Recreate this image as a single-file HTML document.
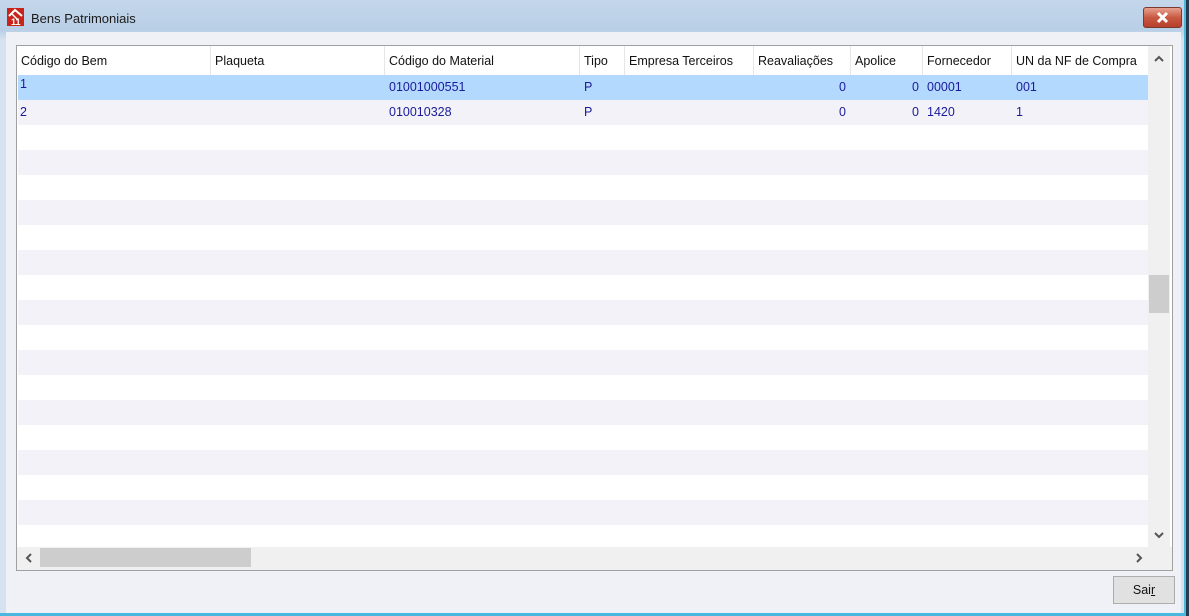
<!DOCTYPE html>
<html><head><style>
*{margin:0;padding:0;box-sizing:border-box}
body{width:1189px;height:616px;overflow:hidden;background:#2b3a4a;font-family:"Liberation Sans",sans-serif;font-size:12.5px;position:relative}
.win{position:absolute;left:0;top:0;width:1189px;height:616px;background:linear-gradient(#c4d6ea,#b9cfe6 30px,#d5e2f0 40px)}
.client{position:absolute;left:6px;top:32px;width:1175px;height:581px;background:#f0f0f7}
.bot{position:absolute;left:0;top:613px;width:1189px;height:3px;background:#4ab7de}
.rgt{position:absolute;left:1184px;top:0;width:2px;height:616px;background:#4ab7de}
.rgt2{position:absolute;left:1186px;top:0;width:3px;height:616px;background:#2b3a4a}
.title{position:absolute;left:31px;top:11px;font-size:13px;color:#1a1a1a}
.close{position:absolute;left:1143px;top:7px;width:39px;height:21px;border:1px solid #7a3a30;border-radius:3px;background:linear-gradient(#e8a090,#c85a44 50%,#b8402a)}
.grid{position:absolute;left:16px;top:45px;width:1157px;height:526px;border:1px solid #a0a0a0;background:#fff;overflow:hidden}
.hdr{position:absolute;left:0;top:0;height:29px;width:1131px;background:#fff}
.hc{position:absolute;top:0;height:29px;line-height:30px;padding-left:4px;border-right:1px solid #e6e6e6;color:#111;white-space:nowrap}
.row{position:absolute;left:1px;width:1130px;height:25px}
.c{position:absolute;top:0;line-height:25px;color:#1a1a9a;white-space:nowrap}
.vs{position:absolute;left:1131px;top:0;width:22px;height:501px;background:#f0f0f0}
.hs{position:absolute;left:0;top:501px;width:1155px;height:23px;background:#f0f0f0}
.btn{position:absolute;left:1113px;top:576px;width:62px;height:28px;border:1px solid #adadad;background:#e1e1e1;text-align:center;line-height:27px;color:#111}
</style></head><body>
<div class="win">
<svg style="position:absolute;left:7px;top:8px" width="17" height="18" viewBox="0 0 17 18"><rect width="17" height="18" fill="#c8241c"/><path d="M2 8 L8 2 L15 8" stroke="#fff" stroke-width="2" fill="none"/><path d="M4 5 L11 12" stroke="#fff" stroke-width="1.5"/><text x="4" y="17" font-size="9" font-weight="bold" fill="#fff" font-family="Liberation Sans">11</text></svg>
<div class="title">Bens Patrimoniais</div>
<div class="close"><svg width="37" height="19" viewBox="0 0 37 19"><path d="M14 5 L23 14 M23 5 L14 14" stroke="#fff" stroke-width="3"/></svg></div>
<div class="client"></div>
<div class="bot"></div>
<div class="rgt"></div><div class="rgt2"></div>
<div class="grid">
<div class="hdr">
<div class="hc" style="left:0;width:194px">Código do Bem</div>
<div class="hc" style="left:194px;width:174px">Plaqueta</div>
<div class="hc" style="left:368px;width:195px">Código do Material</div>
<div class="hc" style="left:563px;width:45px">Tipo</div>
<div class="hc" style="left:608px;width:129px">Empresa Terceiros</div>
<div class="hc" style="left:737px;width:97px">Reavaliações</div>
<div class="hc" style="left:834px;width:72px">Apolice</div>
<div class="hc" style="left:906px;width:89px">Fornecedor</div>
<div class="hc" style="left:995px;width:136px;border:none">UN da NF de Compra</div>
</div>
<div class="row" style="top:29px;background:#b3d9ff">
<span class="c" style="left:2px;top:-3px">1</span><span class="c" style="left:371px">01001000551</span><span class="c" style="left:566px">P</span><span class="c" style="left:821px">0</span><span class="c" style="left:894px">0</span><span class="c" style="left:909px">00001</span><span class="c" style="left:998px">001</span></div>
<div class="row" style="top:54px;background:#f2f2f8">
<span class="c" style="left:2px">2</span><span class="c" style="left:371px">010010328</span><span class="c" style="left:566px">P</span><span class="c" style="left:821px">0</span><span class="c" style="left:894px">0</span><span class="c" style="left:909px">1420</span><span class="c" style="left:998px">1</span></div>
<div class="row" style="top:104px;background:#f2f2f8"></div>
<div class="row" style="top:154px;background:#f2f2f8"></div>
<div class="row" style="top:204px;background:#f2f2f8"></div>
<div class="row" style="top:254px;background:#f2f2f8"></div>
<div class="row" style="top:304px;background:#f2f2f8"></div>
<div class="row" style="top:354px;background:#f2f2f8"></div>
<div class="row" style="top:404px;background:#f2f2f8"></div>
<div class="row" style="top:454px;background:#f2f2f8"></div>
<div class="vs"><div style="position:absolute;left:1px;top:229px;width:20px;height:38px;background:#cdcdcd"></div>
<svg style="position:absolute;left:6px;top:9px" width="10" height="7"><path d="M1 6 L5 2 L9 6" stroke="#555" stroke-width="2" fill="none"/></svg>
<svg style="position:absolute;left:6px;top:486px" width="10" height="7"><path d="M1 1 L5 5 L9 1" stroke="#555" stroke-width="2" fill="none"/></svg></div>
<div class="hs"><div style="position:absolute;left:23px;top:1px;width:211px;height:19px;background:#cdcdcd"></div>
<svg style="position:absolute;left:8px;top:6px" width="7" height="10"><path d="M6 1 L2 5 L6 9" stroke="#555" stroke-width="2" fill="none"/></svg>
<svg style="position:absolute;left:1119px;top:6px" width="7" height="10"><path d="M1 1 L5 5 L1 9" stroke="#555" stroke-width="2" fill="none"/></svg></div>
</div>
<div class="btn">Sai<u>r</u></div>
</div>
</body></html>
